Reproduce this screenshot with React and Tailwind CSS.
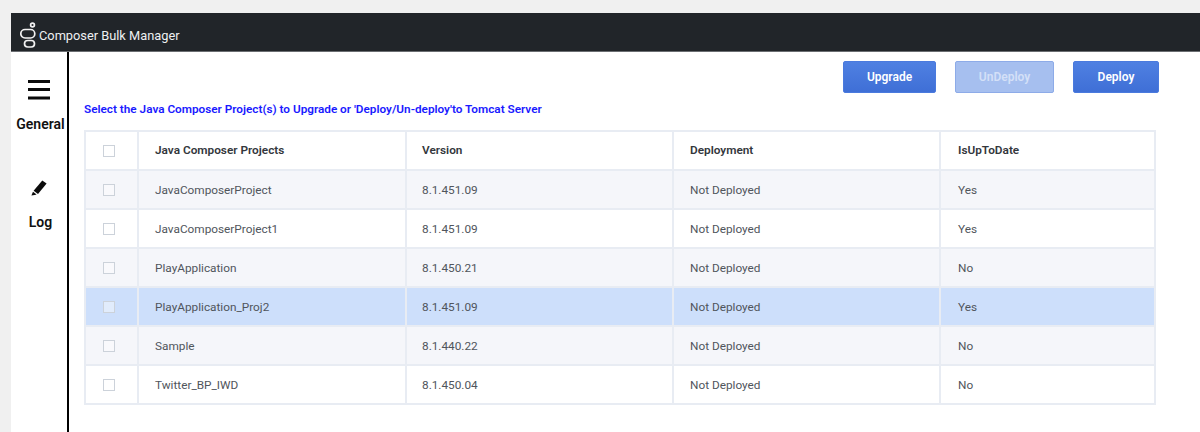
import React from "react";

const rows = [
  ["JavaComposerProject", "8.1.451.09", "Not Deployed", "Yes", "bg-[#f5f6fa]"],
  ["JavaComposerProject1", "8.1.451.09", "Not Deployed", "Yes", "bg-white"],
  ["PlayApplication", "8.1.450.21", "Not Deployed", "No", "bg-[#f5f6fa]"],
  ["PlayApplication_Proj2", "8.1.451.09", "Not Deployed", "Yes", "bg-[#cddffb]"],
  ["Sample", "8.1.440.22", "Not Deployed", "No", "bg-[#f5f6fa]"],
  ["Twitter_BP_IWD", "8.1.450.04", "Not Deployed", "No", "bg-white"],
];

function Box() {
  return <span className="block w-[12px] h-[12px] border border-[#ccd2da] bg-white/40" />;
}

function Row({ cells, bg, head }) {
  const text = head ? "font-semibold text-[#33373c] text-[11.8px]" : "text-[#50555c] text-[11.8px] pt-[2px]";
  const cell = `flex items-center border-r-2 border-[#e8ecf3] ${text}`;
  return (
    <div className={`flex h-[39px] border-b-2 border-[#e8ecf3] ${bg}`}>
      <div className="w-[53px] flex items-center justify-start pl-[17px] border-r-2 border-[#e8ecf3]"><Box /></div>
      <div className={`w-[268px] pl-[16px] ${cell}`}>{cells[0]}</div>
      <div className={`w-[267px] pl-[15px] ${cell}`}>{cells[1]}</div>
      <div className={`w-[267px] pl-[16px] ${cell}`}>{cells[2]}</div>
      <div className={`w-[213px] pl-[17px] flex items-center ${text}`}>{cells[3]}</div>
    </div>
  );
}

function Btn({ children, off }) {
  return (
    <button className={`h-[32px] rounded-[2px] border text-[12px] font-semibold ${off ? "bg-[#a6bfef] border-[#8dabe8] text-[#d4e0f7]" : "bg-gradient-to-b from-[#4f80e2] to-[#3f6fd6] border-[#4a7ade] text-white"} ${children === "Upgrade" ? "w-[93px]" : children === "UnDeploy" ? "w-[99px]" : "w-[86px]"}`}>
      {children}
    </button>
  );
}

export default function App() {
  return (
    <div className="h-[432px] bg-[#f0f0f0] pl-[11px] pt-[13px] overflow-hidden font-['Roboto',sans-serif] text-[12px]">
      <header className="h-[39px] bg-[#212529] border-b border-[#6b6e72] flex items-end pl-[9px] pb-[2px] gap-[1px]">
        <svg width="18" height="27" viewBox="0 0 18 27" fill="none" stroke="#f2f2f2" strokeWidth="1.7" className="block">
          <circle cx="12.5" cy="3" r="1.9" />
          <rect x="0.8" y="7.5" width="14" height="8.5" rx="4.25" />
          <rect x="4.5" y="18.5" width="10" height="6.5" rx="3.25" />
        </svg>
        <span className="text-[12.8px] text-[#eef0f1] leading-[16px] mb-[5px]">Composer Bulk Manager</span>
      </header>
      <div className="flex h-[380px] bg-white">
        <aside className="w-[58px] border-r-2 border-black flex flex-col items-center pl-[3px]">
          <svg width="22" height="20" viewBox="0 0 22 20" className="mt-[28px] mr-[3px] block" fill="#0b0b0b">
            <rect y="0" width="22" height="3" />
            <rect y="8" width="22" height="3" />
            <rect y="16.5" width="22" height="3" />
          </svg>
          <span className="mt-[16px] text-[14px] font-semibold text-[#111] leading-[16px]">General</span>
          <svg width="18" height="18" viewBox="0 0 18 18" className="mt-[47px] mr-[3px] block" fill="#0b0b0b">
            <path d="M12.3 1.4 L16.6 4.6 L8 15 L3.6 11.8 Z" />
            <path d="M3 12.8 L6.6 15.4 L4.6 16 L1.4 16.6 Z" />
          </svg>
          <span className="mt-[17px] text-[14px] font-semibold text-[#111] leading-[16px]">Log</span>
        </aside>
        <main className="flex-1 pl-[15px]">
          <div className="flex justify-end gap-[19px] pr-[41px] pt-[9px]">
            <Btn>Upgrade</Btn>
            <Btn off>UnDeploy</Btn>
            <Btn>Deploy</Btn>
          </div>
          <p className="mt-[8px] text-[11.75px] font-semibold text-[#1a1aff] leading-[16px]">
            Select the Java Composer Project(s) to Upgrade or 'Deploy/Un-deploy'to Tomcat Server
          </p>
          <div className="mt-[13px] w-[1072px] border-l-2 border-r-2 border-t-2 border-[#e8ecf3]">
            <Row head bg="bg-white" cells={["Java Composer Projects", "Version", "Deployment", "IsUpToDate"]} />
            {rows.map((r) => <Row key={r[0]} cells={r} bg={r[4]} />)}
          </div>
        </main>
      </div>
    </div>
  );
}
